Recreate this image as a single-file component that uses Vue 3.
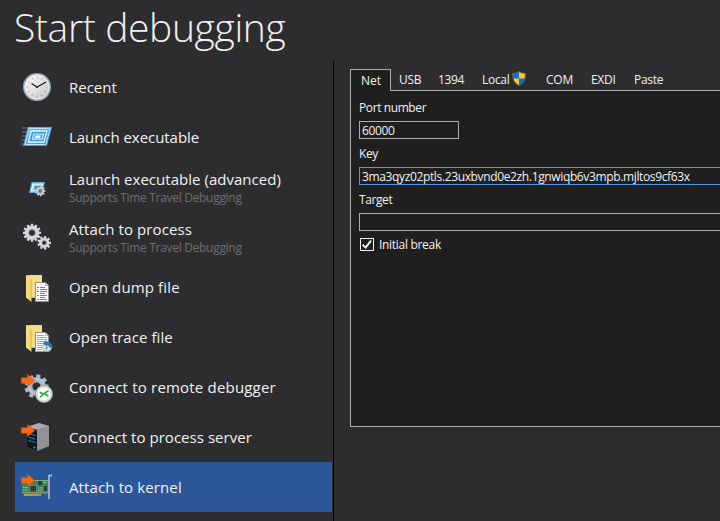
<script setup>
import { ref } from 'vue'

// tracking: letter spacing of the label, in px
const items = [
  { icon: 'clock', label: 'Recent', tracking: 0 },
  { icon: 'launch', label: 'Launch executable', tracking: -0.05 },
  { icon: 'advanced', label: 'Launch executable (advanced)', note: 'Supports Time Travel Debugging', tracking: 0.03 },
  { icon: 'gears', label: 'Attach to process', note: 'Supports Time Travel Debugging', tracking: 0.1 },
  { icon: 'dump', label: 'Open dump file', tracking: 0.14 },
  { icon: 'trace', label: 'Open trace file', tracking: 0.07 },
  { icon: 'remote', label: 'Connect to remote debugger', tracking: 0.19 },
  { icon: 'server', label: 'Connect to process server', tracking: 0.04 },
  { icon: 'kernel', label: 'Attach to kernel', tracking: 0.12 },
]
const selected = ref('kernel')

const tabs = ['Net', 'USB', '1394', 'Local', 'COM', 'EXDI', 'Paste']
const tab = ref('Net')

const port = ref('60000')
const key = ref('3ma3qyz02ptls.23uxbvnd0e2zh.1gnwiqb6v3mpb.mjltos9cf63x')
const target = ref('')
const initialBreak = ref(true)

// Outline of a gear centred on (cx, cy) with n teeth.
function gear(cx, cy, outer, inner, n) {
  const pts = []
  const step = (Math.PI * 2) / n
  for (let i = 0; i < n; i++) {
    const a = i * step
    for (const [f, r] of [[-0.34, inner], [-0.24, outer], [0.24, outer], [0.34, inner]]) {
      pts.push(`${(cx + Math.cos(a + f * step) * r).toFixed(2)},${(cy + Math.sin(a + f * step) * r).toFixed(2)}`)
    }
  }
  return pts.join(' ')
}
</script>

<template>
  <div class="page">
    <h1>Start debugging</h1>
    <div class="body">
      <nav class="menu">
        <div
          v-for="item in items"
          :key="item.icon"
          class="item"
          :class="{ active: item.icon === selected }"
          @click="selected = item.icon"
        >
          <svg class="icon" viewBox="0 0 50 50">
            <defs>
              <linearGradient id="face" x1="0" y1="0" x2="1" y2="1">
                <stop offset="0" stop-color="#ffffff" /><stop offset="1" stop-color="#c4c4c4" />
              </linearGradient>
              <linearGradient id="blue" x1="0" y1="0" x2="1" y2="1">
                <stop offset="0" stop-color="#7cc0f0" /><stop offset="1" stop-color="#2f8ddb" />
              </linearGradient>
              <linearGradient id="fold" x1="0" y1="0" x2="1" y2="0">
                <stop offset="0" stop-color="#fbe08c" /><stop offset="1" stop-color="#f3cc68" />
              </linearGradient>
            </defs>

            <g v-if="item.icon === 'clock'">
              <circle cx="22" cy="25" r="13.2" fill="url(#face)" stroke="#9dabb2" stroke-width="1.6" />
              <circle cx="22" cy="25" r="12" fill="none" stroke="#e9edef" stroke-width=".8" />
              <circle cx="22" cy="25" r="9.6" fill="none" stroke="#8b8b8b" stroke-width="1.6" stroke-dasharray=".8 4.226" stroke-dashoffset=".4" />
              <path d="M16.5 21.5 22 25l9-5" fill="none" stroke="#222" stroke-width="1.3" />
              <circle cx="22" cy="25" r="1.1" fill="#222" />
            </g>

            <g v-else-if="item.icon === 'launch'">
              <path d="M7 16h7M7 20h6M7 24h5M6 28h6M6 32h4" stroke="#58798f" stroke-width="1.1" />
              <path d="M13 15h24l-5 19H8z" fill="url(#blue)" />
              <path d="M14.2 16.5h20.9l-4.2 16H10z" fill="none" stroke="#b7e0fa" stroke-width="1" />
              <path d="M16.3 19h15.6l-2.9 11H13.4z" fill="#3c9be2" stroke="#e5f5ff" stroke-width="1.3" />
              <path d="M18.7 22h9.8l-1.3 5.200h-9.800z" fill="#4ca7e8" stroke="#cceafb" stroke-width="1.2" />
              <path d="M20.500 23.500h5.200l-.6 2.500h-5.200z" fill="#fff" />
            </g>

            <g v-else-if="item.icon === 'advanced'">
              <path d="M16.5 20H30l-3 11H14z" fill="#58ace8" />
              <path d="M18 22h9.700l-1.800 7h-9.700z" fill="#a8d8f7" stroke="#f1faff" stroke-width="1.2" />
              <path d="M20 24h5.500l-.7 3h-5.600z" fill="#3189cc" />
              <polygon :points="gear(25.2, 29, 5.2, 3.9, 9)" fill="#d8dadb" stroke="#70787d" stroke-width=".4" />
              <circle cx="25.2" cy="29" r="2" fill="#4b84a8" stroke="#888" stroke-width=".7" />
            </g>

            <g v-else-if="item.icon === 'gears'">
              <polygon :points="gear(17, 20.8, 9.100, 7.100, 12)" fill="#d3d7da" />
              <circle cx="17" cy="20.8" r="3.3" fill="#2d2d30" stroke="#a0a5a8" stroke-width=".8" />
              <polygon :points="gear(29.2, 30.8, 6.9, 5, 9)" fill="#d3d7da" />
              <circle cx="29.2" cy="30.8" r="2.2" fill="#2d2d30" stroke="#a0a5a8" stroke-width=".7" />
            </g>

            <g v-else-if="item.icon === 'dump' || item.icon === 'trace'">
              <path d="M11 13h16v23H16z" fill="#e5b956" />
              <path d="M14 13h13v22H14z" fill="#f8dc88" />
              <path d="M11 13l5.500 4.500V40L11 35.500z" fill="url(#fold)" />
              <path d="M16.500 17.500V36" stroke="#d9ac4c" stroke-width=".6" />
              <path d="M20.500 20.500h10l3 3v16h-13z" fill="#fff" stroke="#8f9394" />
              <path d="M30.500 20.500v3h3" fill="#dfe3e5" stroke="#8f9394" stroke-width=".7" />
              <path
                v-if="item.icon === 'dump'"
                d="M22 25.500h2m1 0h5M22 27.500h1m2 0h7M22 29.500h2m1 0h7M25 31.500h5M22 33.500h2m1 0h7M25 35.500h5M22 37.500h2m1 0h7"
                stroke="#3e8fce"
              />
              <template v-else>
                <path d="M22 23.500h7M22 25.500h10M22 27.500h10M22 29.500h8M22 31.500h6M22 33.500h5M22 35.500h5M22 37.500h5" stroke="#a4a4a4" />
                <circle cx="32.2" cy="35" r="4.600" fill="#d9dddf" stroke="#8b9dab" stroke-width=".7" />
                <path d="M31.500 29.500a5.200 5.200 0 0 1 5.300 6.600l-2.600-1.200a3 3 0 0 0-2.500-2.200v1.600l-4-2.800 3.800-3.400z" fill="#2078be" />
                <path d="M32 33.500V36.500h-1.600" fill="none" stroke="#555" stroke-width=".8" />
              </template>
            </g>

            <g v-else-if="item.icon === 'remote'">
              <polygon :points="gear(21.5, 24.5, 12.2, 9.200, 9)" fill="#a9b9c6" />
              <circle cx="21.5" cy="24.5" r="7.500" fill="none" stroke="#c3d0da" stroke-width="1.200" />
              <circle cx="21.5" cy="24.5" r="4.4" fill="#2d2d30" stroke="#8197a8" />
              <circle cx="29" cy="32" r="8.500" fill="#fff" stroke="#929292" stroke-width="1" />
              <circle cx="29" cy="32" r="7" fill="none" stroke="#b4b4b4" stroke-width=".7" />
              <path d="M24.800 30.200l3.800 1.800-3.600 3.500M33.600 28.600l-4 2.800 3.800 3" fill="none" stroke="#2fae36" stroke-width="1.700" />
            </g>

            <g v-else-if="item.icon === 'server'">
              <path d="M12 15 24 11l10 3v20l-12 5-10-4z" fill="#66686b" />
              <path d="M12 15 24 11l10 3-12 4z" fill="#a9abae" />
              <path d="M22 18l12-4v20l-12 5z" fill="#919396" />
              <path d="M12 15l10 3v21l-10-4z" fill="#151719" />
              <path d="M13.500 21.500l7 2M13.500 25.200l7 2M13.500 28.500l7 2" stroke="#1685d1" stroke-width="1" />
              <circle cx="19.500" cy="35.500" r=".9" fill="#36cce8" />
            </g>

            <g v-else>
              <path d="M7 18h26v13.500H7z" fill="#3f8460" />
              <path d="M7 18.500h26M7 30.800h26" stroke="#86b59a" stroke-width=".9" />
              <path d="M9 31.800h17V34H9z" fill="#d29a3f" />
              <path d="M12 31.800V34m3-2.200V34m3-2.200V34m3-2.200V34m3-2.200V34" stroke="#8c6632" stroke-width=".6" />
              <path d="M15 23.500h6.500V30H15z" fill="#35393a" stroke="#929b93" stroke-width=".6" />
              <path d="M23 19h4v4h-4zM29 24h3v5h-3z" fill="#303c38" />
              <path d="M8 25.500h5M8 28h5M23 26h5M23 28.500h4M28.500 20.500h3" stroke="#add0b8" stroke-width="1" stroke-dasharray="1.4 .8" />
              <path d="M37 13.500h-3V37" fill="none" stroke="#c0ccd6" stroke-width="1.400" />
            </g>

            <path
              v-if="['remote', 'server', 'kernel'].includes(item.icon)"
              d="M6.300 15.700h6.200v-3.300l7.300 6.100-7.300 6v-3.300H6.300z"
              fill="#fb681c"
              stroke="#d84a08"
              stroke-width=".7"
            />
          </svg>
          <div class="text">
            <div class="label" :style="{ letterSpacing: item.tracking + 'px' }">{{ item.label }}</div>
            <div v-if="item.note" class="note">{{ item.note }}</div>
          </div>
        </div>
      </nav>

      <main class="content">
        <div class="tabs">
          <div
            v-for="name in tabs"
            :key="name"
            class="tab"
            :class="[{ current: name === tab }, 't-' + name.toLowerCase()]"
            @click="tab = name"
          >
            <span>{{ name }}</span>
            <svg v-if="name === 'Local'" class="shield" viewBox="0 0 14 15">
              <path d="M7 .5C5 2 3 2.300 .7 2.300c0 5 .5 9.500 6.300 12.200 5.800-2.700 6.300-7.200 6.300-12.200C11 2.300 9 2 7 .5z" fill="#ffc334" />
              <path d="M7 .5C5 2 3 2.300 .7 2.300L.9 7.500H7zM7 7.500h6.100c-.5 3-2 5.400-6.100 7z" fill="#0b70cc" />
              <path d="M7 .5C5 2 3 2.300 .7 2.300c0 5 .5 9.500 6.300 12.200 5.800-2.700 6.300-7.200 6.300-12.200C11 2.300 9 2 7 .5z" fill="none" stroke="#5b6064" stroke-width=".9" />
            </svg>
          </div>
        </div>
        <div class="panel">
          <label class="caption">Port number</label>
          <input v-model="port" class="field short" type="text" />
          <label class="caption">Key</label>
          <input v-model="key" class="field focus" type="text" />
          <label class="caption">Target</label>
          <input v-model="target" class="field" type="text" />
          <div class="check" @click="initialBreak = !initialBreak">
            <span class="box">
              <svg v-if="initialBreak" viewBox="0 0 12 11"><path d="M1.700 5.700l2.900 2.900 5.400-7" fill="none" stroke="#f1f1f1" stroke-width="2" /></svg>
            </span>
            <span class="check-label">Initial break</span>
          </div>
        </div>
      </main>
    </div>
  </div>
</template>

<style>
body {
  background: #2d2d30;
  overflow: hidden;
}
</style>

<style scoped>
.page {
  width: 720px;
  height: 521px;
  overflow: hidden;
  background: #2d2d30;
  color: #f1f1f1;
  font-family: "Open Sans", "Noto Sans", sans-serif;
  display: flex;
  flex-direction: column;
}
h1 {
  margin: 0;
  height: 61px;
  padding-left: 14px;
  box-sizing: border-box;
  flex: none;
  font-size: 39px;
  line-height: 54px;
  font-weight: 300;
  letter-spacing: -0.36px;
  white-space: nowrap;
}
.body {
  flex: 1;
  display: flex;
  min-height: 0;
}
.menu {
  width: 318px;
  flex: none;
  padding: 1px 0 0 15px;
  border-right: 1px solid #000;
}
.item {
  display: flex;
  align-items: center;
  width: 317px;
  height: 50px;
}
.item.active {
  background: #2b579a;
}
.icon {
  width: 50px;
  height: 50px;
  flex: none;
}
.text {
  padding-left: 4px;
  white-space: nowrap;
}
.label {
  font-size: 15px;
  line-height: 20px;
}
.note {
  padding-top: 1px;
  margin-bottom: -1px;
  font-size: 12px;
  line-height: 16px;
  letter-spacing: -0.3px;
  color: #6d6d6d;
}
.content {
  flex: 1;
  min-width: 0;
  padding: 8px 0 0 16px;
}
.tabs {
  display: flex;
  height: 21px;
  font-size: 12px;
  line-height: 20px;
}
.tab {
  display: flex;
  box-sizing: border-box;
  height: 21px;
  padding: 1px 0 0 8px;
  letter-spacing: -0.3px;
  white-space: nowrap;
}
.tab.current {
  height: 22px;
  padding: 1px 0 0 10px;
  border: 1px solid #acacac;
  border-bottom: 0;
  background: #1f1f1f;
  letter-spacing: 0;
  position: relative;
}
.t-net { width: 41px; }
.t-usb { width: 39px; }
.tab.t-1394 { width: 44px; letter-spacing: -0.4px; }
.tab.t-local { width: 64px; gap: 3px; }
.tab.t-com { width: 45px; letter-spacing: -0.2px; }
.tab.t-exdi { width: 43px; letter-spacing: -0.3px; }
.shield {
  width: 14px;
  height: 15px;
  margin-top: 1px;
}
.panel {
  box-sizing: border-box;
  width: 400px;
  height: 337px;
  padding: 8px 0 0 8px;
  border: 1px solid #acacac;
  background: #1f1f1f;
  display: flex;
  flex-direction: column;
  font-size: 12px;
}
.caption {
  height: 18px;
  line-height: 18px;
  margin-bottom: 4px;
  letter-spacing: -0.4px;
}
.field {
  box-sizing: border-box;
  height: 18px;
  width: 380px;
  margin: 0 0 6px;
  padding: 0 2px;
  border: 1px solid #acacac;
  border-radius: 0;
  outline: 0;
  background: #1f1f1f;
  color: #f1f1f1;
  font: inherit;
  line-height: 16px;
  letter-spacing: -0.36px;
}
.short { width: 100px; }
.focus { border-color: #569de5; }
.check {
  display: flex;
  align-items: center;
  height: 16px;
  gap: 5px;
  margin-top: -1px;
  padding-left: 1px;
  letter-spacing: -0.3px;
}
.box {
  box-sizing: border-box;
  width: 14px;
  height: 13px;
  border: 1px solid #f1f1f1;
  display: flex;
}
.box svg {
  width: 12px;
  height: 11px;
}
</style>
